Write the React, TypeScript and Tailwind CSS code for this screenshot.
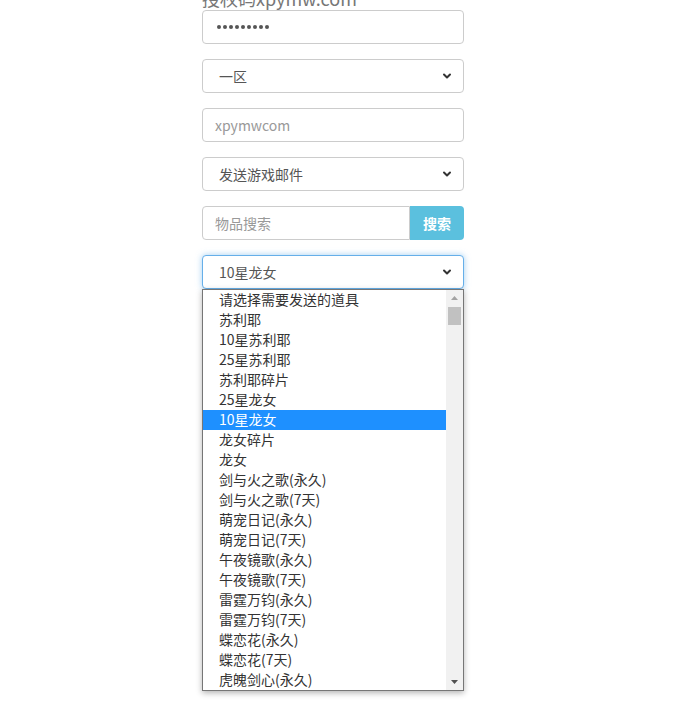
import { ChevronDown } from 'lucide-react';

const items = [
  '请选择需要发送的道具',
  '苏利耶',
  '10星苏利耶',
  '25星苏利耶',
  '苏利耶碎片',
  '25星龙女',
  '10星龙女',
  '龙女碎片',
  '龙女',
  '剑与火之歌(永久)',
  '剑与火之歌(7天)',
  '萌宠日记(永久)',
  '萌宠日记(7天)',
  '午夜镜歌(永久)',
  '午夜镜歌(7天)',
  '雷霆万钧(永久)',
  '雷霆万钧(7天)',
  '蝶恋花(永久)',
  '蝶恋花(7天)',
  '虎魄剑心(永久)',
];

const font = { fontFamily: '"Noto Sans CJK SC", "Noto Sans", sans-serif' };

function SelectBox({ value, focused }: { value: string; focused?: boolean }) {
  return (
    <div
      className={`h-[34px] flex items-center justify-between pl-[16px] pr-[10px] rounded-[4px] bg-white border text-[14px] text-[#555] ${
        focused ? 'border-[#66afe9] shadow-[0_0_6px_rgba(102,175,233,0.6)]' : 'border-[#ccc]'
      }`}
    >
      <span>{value}</span>
      <ChevronDown className="w-[12px] h-[12px] text-[#333]" strokeWidth={4} />
    </div>
  );
}

export default function App() {
  const selected = '10星龙女';
  return (
    <div className="min-h-[703px] bg-white overflow-hidden" style={font}>
      <div className="w-[262px] ml-[202px]">
        <div className="-mt-[12px] h-[22px] text-[18px] leading-[20px] text-[#777] whitespace-nowrap">授权码xpymw.com</div>

        <div className="h-[34px] flex items-center gap-[2px] pl-[14px] rounded-[4px] border border-[#ccc]">
          {Array.from({ length: 9 }).map((_, i) => (
            <span key={i} className="w-[4px] h-[4px] rounded-full bg-[#555]" />
          ))}
        </div>

        <div className="mt-[15px]">
          <SelectBox value="一区" />
        </div>

        <div className="mt-[15px] h-[34px] flex items-center px-[12px] rounded-[4px] border border-[#ccc] text-[14px] text-[#999]">
          xpymwcom
        </div>

        <div className="mt-[15px]">
          <SelectBox value="发送游戏邮件" />
        </div>

        <div className="mt-[15px] flex h-[34px]">
          <div className="flex-1 flex items-center px-[12px] rounded-l-[4px] border border-[#ccc] text-[14px] text-[#999]">
            物品搜索
          </div>
          <button className="w-[54px] rounded-r-[4px] bg-[#5bc0de] text-white text-[14px] font-bold">搜索</button>
        </div>

        <div className="mt-[15px]">
          <SelectBox value={selected} focused />
        </div>

        <div className="flex border border-[#767676] bg-white shadow-[0_2px_6px_rgba(0,0,0,0.3)]">
          <div className="flex-1 flex flex-col">
            {items.map((it) => (
              <div
                key={it}
                className={`h-[20px] leading-[19px] pl-[16px] text-[14px] whitespace-nowrap ${
                  it === selected ? 'bg-[#1e90ff] text-white' : 'text-[#333]'
                }`}
              >
                {it}
              </div>
            ))}
          </div>
          <div className="w-[17px] bg-[#f1f1f1] flex flex-col items-center">
            <div className="h-[16px] flex items-center justify-center">
              <svg width="7" height="4" viewBox="0 0 7 4">
                <path d="M0 4 L3.5 0 L7 4 Z" fill="#a3a3a3" />
              </svg>
            </div>
            <div className="w-[13px] h-[18px] bg-[#c1c1c1] mt-[1px]" />
            <div className="flex-1" />
            <div className="h-[16px] flex items-center justify-center">
              <svg width="7" height="4" viewBox="0 0 7 4">
                <path d="M0 0 L7 0 L3.5 4 Z" fill="#505050" />
              </svg>
            </div>
          </div>
        </div>
      </div>
    </div>
  );
}
